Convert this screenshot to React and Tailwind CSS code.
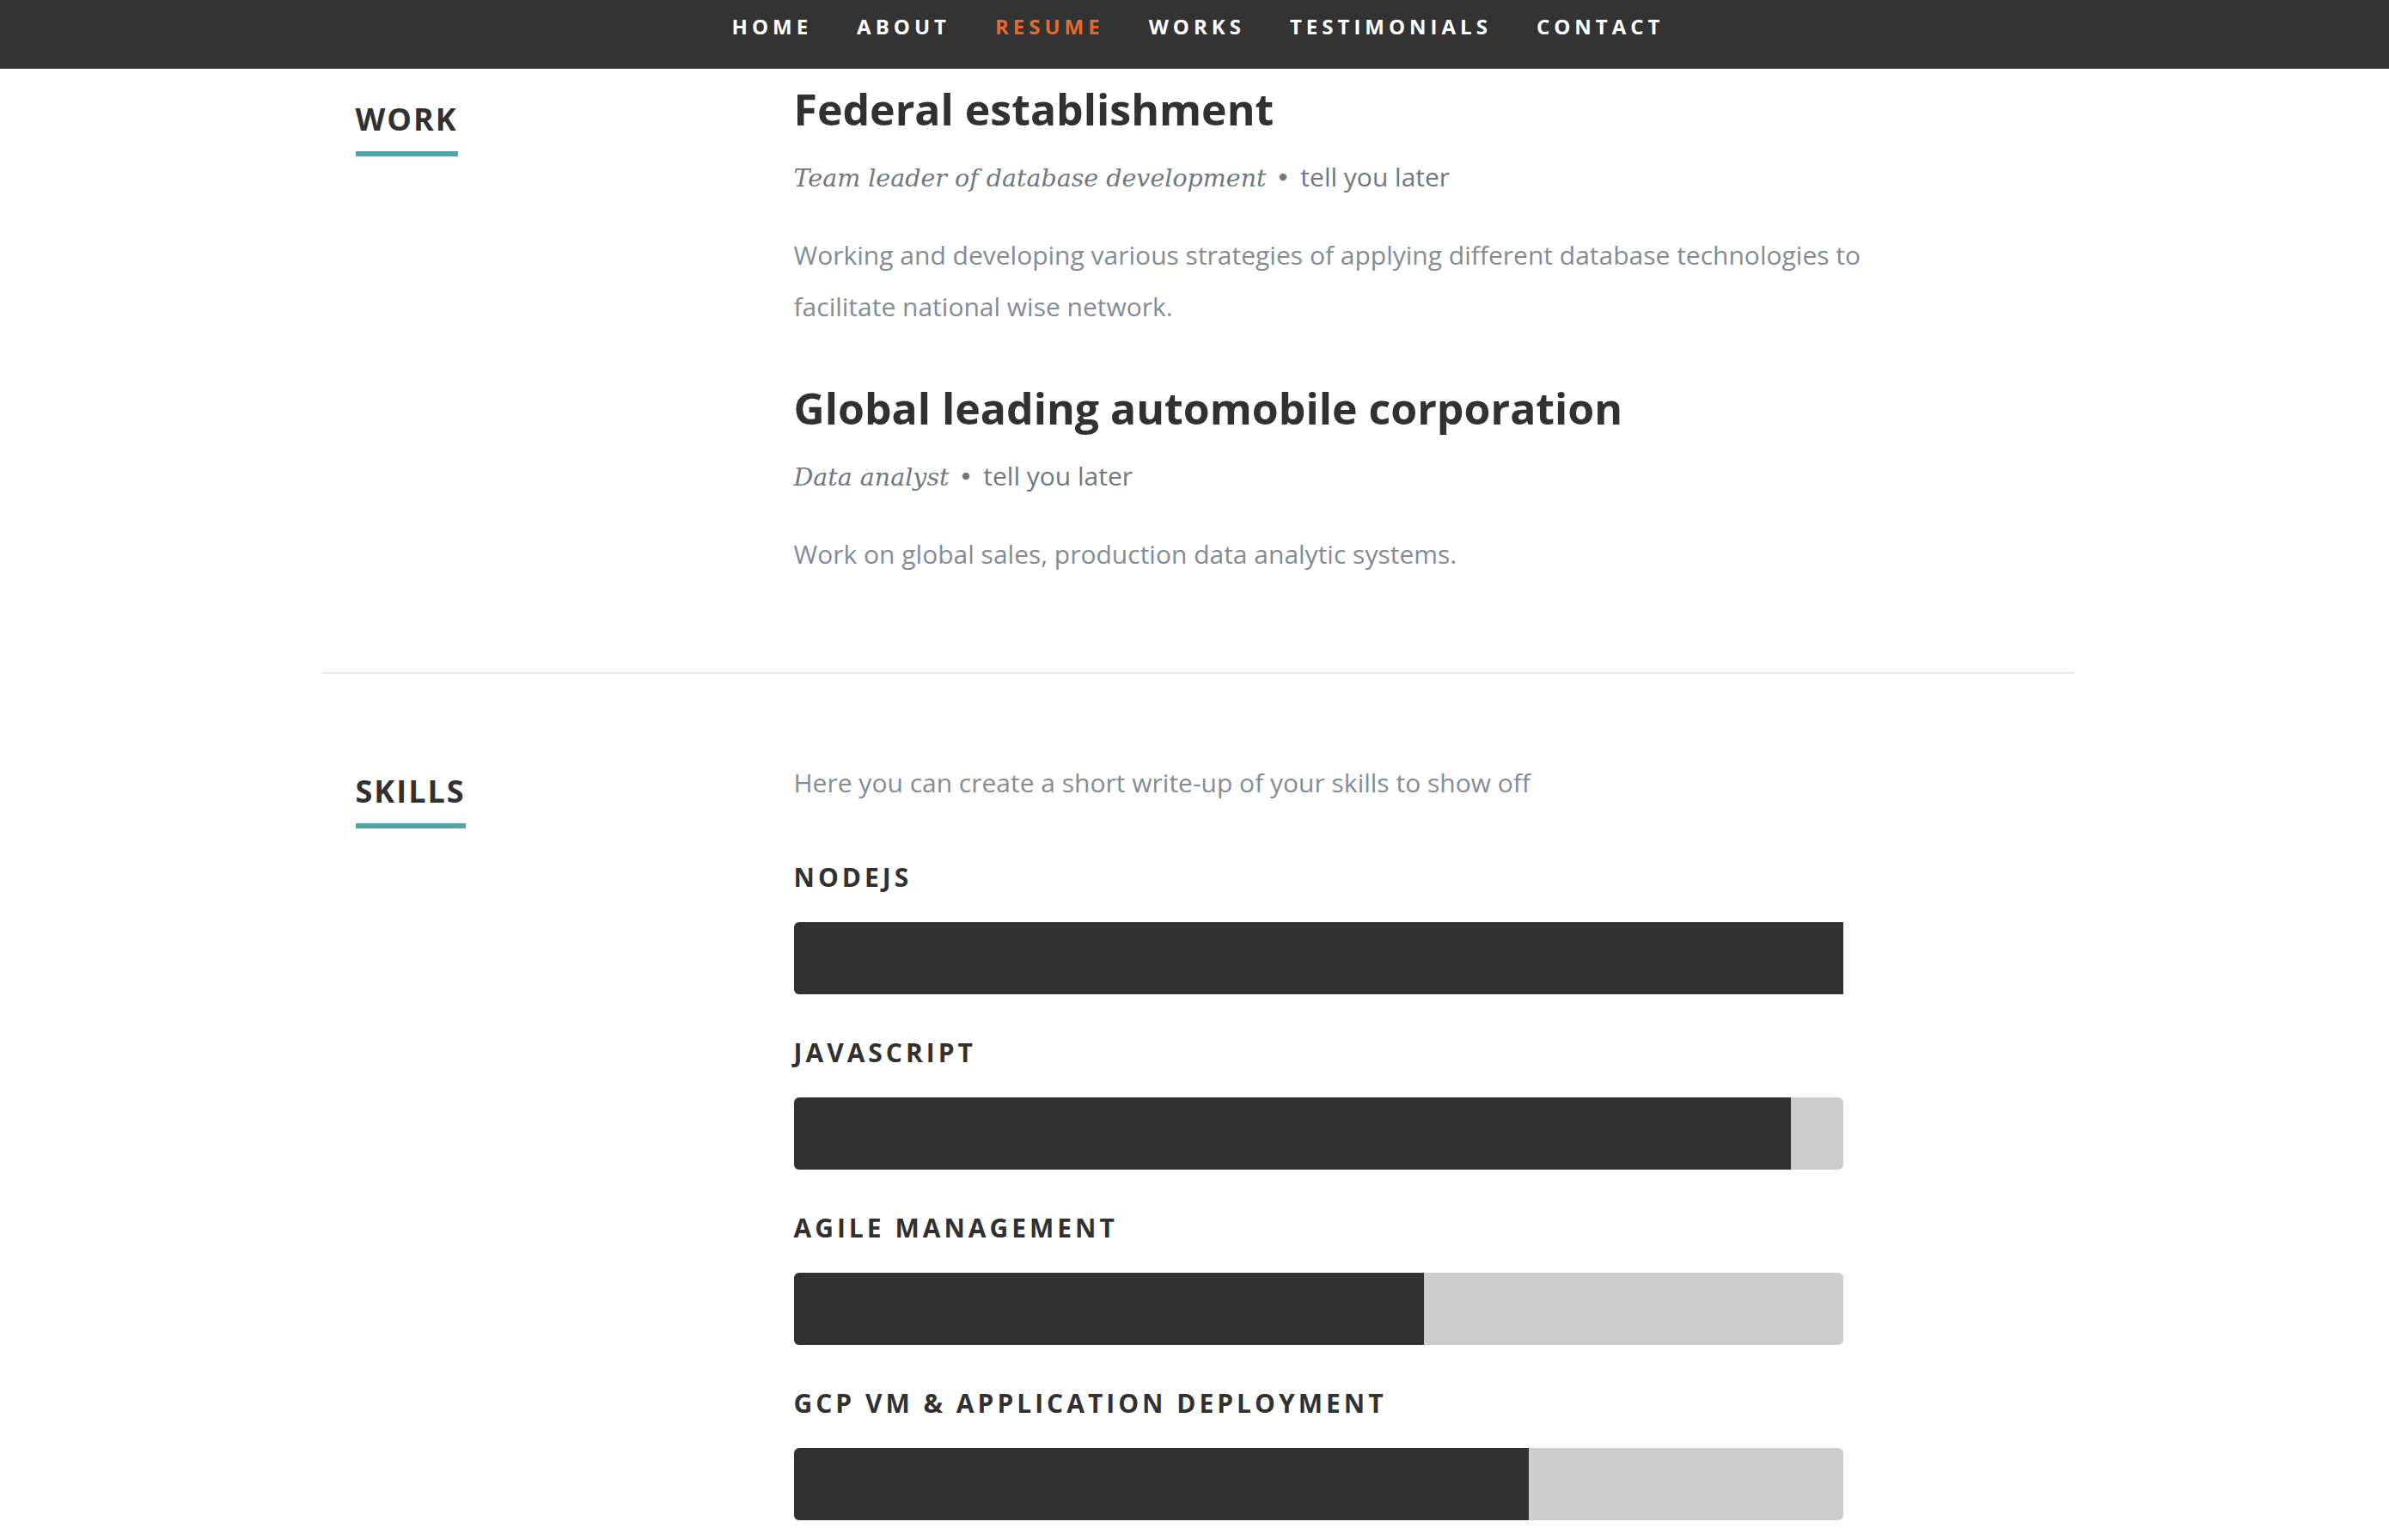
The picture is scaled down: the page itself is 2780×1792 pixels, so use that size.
import React from 'react';

const navItems = ['Home', 'About', 'Resume', 'Works', 'Testimonials', 'Contact'];

const jobs = [
  {
    company: 'Federal establishment',
    title: 'Team leader of database development',
    date: 'tell you later',
    text: 'Working and developing various strategies of applying different database technologies to facilitate national wise network.'
  },
  {
    company: 'Global leading automobile corporation',
    title: 'Data analyst',
    date: 'tell you later',
    text: 'Work on global sales, production data analytic systems.'
  }
];

const skills = [
  { name: 'NodeJS', level: 100 },
  { name: 'Javascript', level: 95 },
  { name: 'Agile management', level: 60 },
  { name: 'GCP VM & Application deployment', level: 70 }
];

const SectionTitle = ({ children }) => (
  <h1 className="text-[36px] leading-[48px] font-bold uppercase tracking-[2px] text-[#313131]">
    <span className="pb-[13px] border-b-[6px] border-[#4ca8ac]">{children}</span>
  </h1>
);

const App = () => {
  return (
    <div className="min-h-screen bg-white font-['Open_Sans',sans-serif]">
      <nav className="h-[80px] bg-[#333333]">
        <ul className="flex justify-center gap-[52px] pt-[15px] pl-[8px]">
          {navItems.map(item => (
            <li
              key={item}
              className={`text-[24px] leading-[32px] font-bold uppercase tracking-[5px] ${item === 'Resume' ? 'text-[#e8692d]' : 'text-white'}`}
            >
              {item}
            </li>
          ))}
        </ul>
      </nav>

      <div className="pl-[7px]">
        <section className="max-w-[2040px] mx-auto mt-[17px]">
          <div className="flex pb-[47px] border-b-2 border-[#e8e8e8]">
            <div className="w-1/4 px-[40px] pt-[18px]">
              <SectionTitle>Work</SectionTitle>
            </div>
            <div className="w-3/4 pl-[40px] pr-[204px]">
              {jobs.map((job, i) => (
                <div key={job.company}>
                  <h3 className="text-[50px] leading-[60px] font-bold text-[#313131]">{job.company}</h3>
                  <p className="mt-[25px] mb-[35px] text-[28.5px] leading-[48px] italic text-[#6e7881] font-['DejaVu_Serif',serif]">
                    {job.title}
                    <span className="ml-[11px] mr-[12px] not-italic">&bull;</span>
                    <em className="not-italic text-[30px] font-['Open_Sans',sans-serif]">{job.date}</em>
                  </p>
                  <p className={`text-[30px] leading-[60px] text-[#838c95] ${i === 0 ? 'mb-[58px]' : 'mb-[60px]'}`}>
                    {job.text}
                  </p>
                </div>
              ))}
            </div>
          </div>

          <div className="flex pt-[97px]">
            <div className="w-1/4 px-[40px] pt-[16px]">
              <SectionTitle>Skills</SectionTitle>
            </div>
            <div className="w-3/4 pl-[40px] pr-[204px]">
              <p className="text-[30px] leading-[60px] text-[#838c95] mb-[132px]">
                Here you can create a short write-up of your skills to show off
              </p>
              <ul className="w-[95%]">
                {skills.map(skill => (
                  <li key={skill.name} className="relative h-[84px] bg-[#cccccc] rounded-[6px] mb-[120px] last:mb-0">
                    <em className="absolute top-[-76px] left-0 not-italic text-[30px] leading-[48px] font-bold uppercase tracking-[4px] text-[#313131]">
                      {skill.name}
                    </em>
                    <span
                      className="block h-full bg-[#313131] rounded-l-[6px]"
                      style={{ width: `${skill.level}%` }}
                    />
                  </li>
                ))}
              </ul>
            </div>
          </div>
        </section>
      </div>
    </div>
  );
};

export default App;
